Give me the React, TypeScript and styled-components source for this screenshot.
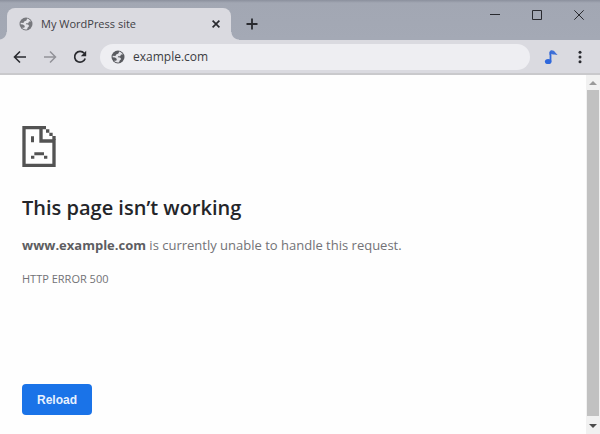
import React from "react";
import styled, { createGlobalStyle } from "styled-components";

const GlobalStyle = createGlobalStyle`
  * { box-sizing: border-box; }
  body { margin: 0; font-family: "Open Sans", "Noto Sans", sans-serif; background: #fefefe; }
  button, input { font-family: inherit; }
`;

const BrowserWindow = styled.div`
  min-height: 100vh;
  display: flex;
  flex-direction: column;
`;

const TabStrip = styled.header`
  height: 40px;
  display: flex;
  align-items: flex-end;
  padding-left: 7px;
  background: linear-gradient(#8b909d 0, #a2a7b3 3px, #a4a9b5 100%);
`;

const Tab = styled.div`
  position: relative;
  width: 224px;
  height: 32px;
  display: flex;
  align-items: center;
  gap: 8px;
  padding: 0 8px 0 12px;
  border-radius: 8px 8px 0 0;
  background: #dadae0;
  color: #3f4045;
  font-size: 11px;
  line-height: 16px;

  &::before, &::after {
    content: "";
    position: absolute;
    bottom: 0;
    width: 8px;
    height: 8px;
  }
  &::before {
    right: 100%;
    background: radial-gradient(circle at 0 0, transparent 7px, #dadae0 8px);
  }
  &::after {
    left: 100%;
    background: radial-gradient(circle at 100% 0, transparent 7px, #dadae0 8px);
  }
`;

const TabIcon = styled.span`
  display: flex;
  color: #77787d;
`;

const TabTitle = styled.span`
  flex: 1;
  white-space: nowrap;
`;

const IconButton = styled.button<{ $size: number }>`
  width: ${(p) => p.$size}px;
  height: ${(p) => p.$size}px;
  display: flex;
  align-items: center;
  justify-content: center;
  flex: none;
  padding: 0;
  border: 0;
  background: none;
  color: #292a2f;

  &:disabled { color: #929298; }
`;

const NewTab = styled.div`
  height: 32px;
  display: flex;
  align-items: center;
  margin-left: 11px;
`;

const WindowControls = styled.div`
  align-self: flex-start;
  display: flex;
  gap: 12px;
  margin-left: auto;
  padding-right: 6px;
`;

const Toolbar = styled.nav`
  height: 35px;
  display: flex;
  align-items: center;
  padding: 0 8px;
  background: #dadae0;
  border-bottom: 2px solid #c9c9cc;
`;

const NavButtons = styled.div`
  display: flex;
  gap: 6px;
  margin-right: 8px;
`;

const AddressBar = styled.label`
  flex: 1;
  min-width: 0;
  height: 26px;
  display: flex;
  align-items: center;
  gap: 8px;
  padding: 0 11px;
  border-radius: 13px;
  background: #eeeef2;
  color: #5a5b60;
`;

const AddressInput = styled.input`
  flex: 1;
  min-width: 0;
  padding: 0;
  border: 0;
  outline: 0;
  background: none;
  color: #3c3d42;
  font-size: 12px;
  line-height: 18px;
`;

const Actions = styled.div`
  display: flex;
  gap: 5px;
  margin-left: 9px;
`;

const Viewport = styled.div`
  flex: 1;
  display: flex;
`;

const Page = styled.main`
  flex: 1;
  padding: 51px 22px 20px;
  background: #fefefe;
  color: #727276;
`;

const SadPage = styled.svg`
  display: block;
  width: 34px;
  height: 41px;
`;

const Heading = styled.h1`
  margin: 27px 0 0;
  color: #242529;
  font-size: 20px;
  font-weight: 600;
  line-height: 28px;
`;

const Message = styled.p`
  margin: 13px 0 0;
  font-size: 13px;
  line-height: 20px;
`;

const Host = styled.strong`
  color: #5d5d61;
  font-weight: 700;
`;

const ErrorCode = styled.p`
  margin: 16px 0 0;
  font-size: 11px;
  line-height: 16px;
`;

const ReloadButton = styled.button`
  display: block;
  height: 31px;
  margin-top: 97px;
  padding: 0 15px;
  border: 0;
  border-radius: 4px;
  background: #1a73e8;
  color: #e8f1fe;
  font-family: "Liberation Sans", Arial, sans-serif;
  font-size: 12px;
  font-weight: 700;
`;

const Scrollbar = styled.div`
  width: 14px;
  display: flex;
  flex-direction: column;
  align-items: center;
  background: #f1f1f1;
`;

const ScrollThumb = styled.div`
  flex: 1;
  width: 12px;
  background: #c1c1c1;
`;

const ScrollArrow = styled.button<{ $color: string; $height: number }>`
  width: 14px;
  height: ${(p) => p.$height}px;
  display: flex;
  align-items: center;
  justify-content: center;
  padding: 0;
  border: 0;
  background: none;
  color: ${(p) => p.$color};
`;

const Globe = () => (
  <svg width="14" height="14" viewBox="0 0 14 14" aria-hidden="true">
    <circle cx="7" cy="7" r="6.5" fill="currentColor" />
    <path d="M8.2 1.6C9.9 2.1 11.2 3.1 11.9 4.6L10 4.6 9.2 6.2 7.1 6.3 6.8 7.2 9 7.5 10.2 9 8.7 10.4 8.1 12.3C6.2 12.8 4.3 12.2 3 10.8L5.2 10.8 5.9 9.1 4 7.5 1.6 7.2 1.7 5.8 4.4 6 5.2 4.4 7.4 3.4Z" fill="#e3e3e8" />
  </svg>
);

const lineProps = { fill: "none", stroke: "currentColor" };

export default function App() {
  return (
    <>
      <GlobalStyle />
      <BrowserWindow>
        <TabStrip>
          <Tab>
            <TabIcon><Globe /></TabIcon>
            <TabTitle>My WordPress site</TabTitle>
            <IconButton $size={14} aria-label="Close tab">
              <svg width="8" height="8" viewBox="0 0 8 8" {...lineProps} strokeWidth="1.7"><path d="M.6.6 7.4 7.4M7.4.6.6 7.4" /></svg>
            </IconButton>
          </Tab>
          <NewTab>
            <IconButton $size={20} aria-label="New tab">
              <svg width="12" height="12" viewBox="0 0 12 12" {...lineProps} strokeWidth="1.8"><path d="M6 .5v11M.5 6h11" /></svg>
            </IconButton>
          </NewTab>
          <WindowControls>
            <IconButton $size={30} aria-label="Minimize">
              <svg width="10" height="10" viewBox="0 0 10 10" {...lineProps}><path d="M0 4.5h10" /></svg>
            </IconButton>
            <IconButton $size={30} aria-label="Maximize">
              <svg width="10" height="10" viewBox="0 0 10 10" {...lineProps}><path d="M.5.5h9v9h-9Z" /></svg>
            </IconButton>
            <IconButton $size={30} aria-label="Close">
              <svg width="10" height="10" viewBox="0 0 10 10" {...lineProps}><path d="m.3.3 9.4 9.4M9.7.3.3 9.7" /></svg>
            </IconButton>
          </WindowControls>
        </TabStrip>

        <Toolbar>
          <NavButtons>
            <IconButton $size={24} aria-label="Back">
              <svg width="14" height="14" viewBox="0 0 14 14" {...lineProps} strokeWidth="1.6"><path d="M13 7H2M7 1.5 1.5 7 7 12.5" /></svg>
            </IconButton>
            <IconButton $size={24} aria-label="Forward" disabled>
              <svg width="14" height="14" viewBox="0 0 14 14" {...lineProps} strokeWidth="1.5"><path d="M1 7h11M7 1.5 12.5 7 7 12.5" /></svg>
            </IconButton>
            <IconButton $size={24} aria-label="Reload page">
              <svg width="14" height="14" viewBox="0 0 14 14" {...lineProps} strokeWidth="1.7">
                <path d="M11.2 3.3A5.4 5.4 0 1 0 12.2 8.5" />
                <path d="M13.2.8v5.4H7.8Z" fill="currentColor" stroke="none" />
              </svg>
            </IconButton>
          </NavButtons>
          <AddressBar>
            <Globe />
            <AddressInput type="text" aria-label="Address" defaultValue="example.com" />
          </AddressBar>
          <Actions>
            <IconButton $size={24} aria-label="Music extension">
              <svg width="14" height="16" viewBox="0 0 14 16">
                <path d="M5.5 6V3C6 1 8 .7 9.7 1.8c1.4.9 1.7 2.3 3.9 4.2-2.2-.5-4.2.3-6.3-1.3Z" fill="#3f70d7" />
                <path d="M6.5 12.5V3" fill="none" stroke="#3268d8" strokeWidth="1.8" />
                <ellipse cx="4.2" cy="12.5" rx="3.3" ry="2.6" fill="#2f68dc" />
              </svg>
            </IconButton>
            <IconButton $size={24} aria-label="Menu">
              <svg width="4" height="14" viewBox="0 0 4 14" fill="currentColor">
                <circle cx="2" cy="2.2" r="1.5" /><circle cx="2" cy="7" r="1.5" /><circle cx="2" cy="11.8" r="1.5" />
              </svg>
            </IconButton>
          </Actions>
        </Toolbar>

        <Viewport>
          <Page>
            <SadPage viewBox="0 0 100 123" fill="#535353" aria-hidden="true">
              <path d="M0 0H71V10H61V40H100V123H0ZM10 10V113H90V50H51V10Z" fillRule="evenodd" />
              <path d="M71 10h10v10H71ZM81 20h10v10H81ZM90 30h10v12H90Z" />
              <path d="M26 31h9v18h-9ZM36 79h29v9H36ZM26 89h10v9H26ZM65 89h10v9H65Z" />
            </SadPage>
            <Heading>This page isn’t working</Heading>
            <Message><Host>www.example.com</Host> is currently unable to handle this request.</Message>
            <ErrorCode>HTTP ERROR 500</ErrorCode>
            <ReloadButton>Reload</ReloadButton>
          </Page>
          <Scrollbar>
            <ScrollArrow $color="#9a9a9a" $height={15} aria-label="Scroll up">
              <svg width="8" height="4" viewBox="0 0 8 4" fill="currentColor"><path d="M0 4 4 0l4 4Z" /></svg>
            </ScrollArrow>
            <ScrollThumb />
            <ScrollArrow $color="#4c4c4c" $height={19} aria-label="Scroll down">
              <svg width="8" height="4" viewBox="0 0 8 4" fill="currentColor"><path d="M0 0 4 4l4-4Z" /></svg>
            </ScrollArrow>
          </Scrollbar>
        </Viewport>
      </BrowserWindow>
    </>
  );
}
